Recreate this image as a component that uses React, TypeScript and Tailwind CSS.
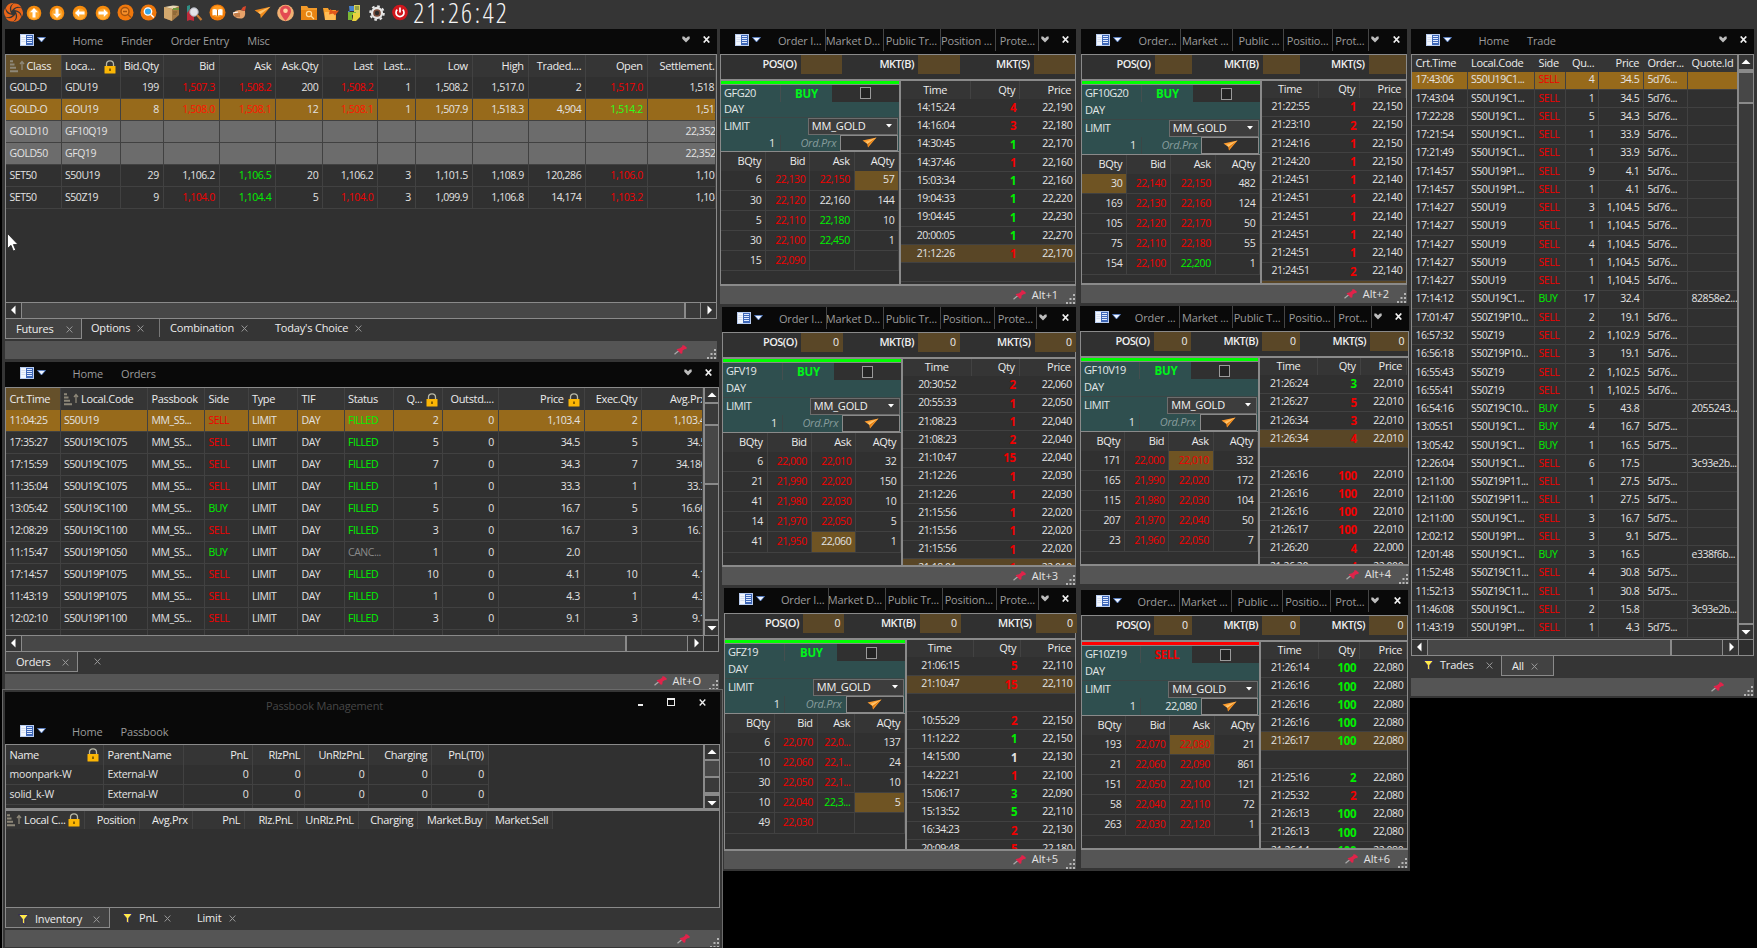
import React from "react";

type Cell = string | [string, string];

const R = "text-[#f00000]";
const G = "text-[#00f000]";

function cx(...c: (string | false | undefined)[]) {
  return c.filter(Boolean).join(" ");
}

/* ---------- small drawings ---------- */

function MenuIcon() {
  return (
    <svg width="26" height="12" viewBox="0 0 26 12" className="shrink-0">
      <rect x="0.5" y="0.5" width="13" height="11" fill="#f2f7ff" stroke="#b9cdf0" />
      <rect x="6" y="1" width="7" height="10" fill="#3f68b8" />
      <path d="M7 2.5h5M7 4.5h5M7 6.5h5M7 8.5h5" stroke="#dfeaff" strokeWidth="1" />
      <path d="M1.500 3.500h4M1.500 5.500h4M1.500 7.500h4" stroke="#c3cfe6" strokeWidth="0.600" />
      <path d="M17.500 3.500h8l-4 4.500z" fill="#eef4ff" stroke="#4f7fd6" strokeWidth="0.7" />
    </svg>
  );
}

function Chevron() {
  return (
    <svg width="8" height="7" viewBox="0 0 8 7" className="shrink-0">
      <path d="M0.300 0.600h1.800L4 2.200 5.900 0.600h1.800v2.200L4 6.600 0.300 2.800z" fill="#bdbdbd" />
    </svg>
  );
}

function CloseX({ c = "#f0f0f0", w = 1.7 }: { c?: string; w?: number }) {
  return (
    <svg width="7" height="7" viewBox="0 0 7 7" className="shrink-0">
      <path d="M0.700 0.500L6.300 6.500M6.300 0.500L0.700 6.500" stroke={c} strokeWidth={w} />
    </svg>
  );
}

function Pin() {
  return (
    <svg width="13" height="10" viewBox="0 0 13 10" className="shrink-0">
      <path d="M0.500 9.300L5 5.500" stroke="#a9a9a9" strokeWidth="1.200" />
      <path d="M2.500 4.200L6 3.300 8.300 1.600 8 0.400 10 0.200 12.800 2.600 12.300 4.200 11 4 8.600 5.500 8.300 8.400 6.800 8.800z" fill="#e0234a" />
    </svg>
  );
}

function Grip() {
  return (
    <svg width="10" height="10" viewBox="0 0 10 10" className="shrink-0">
      <path d="M7 0h2v2h-2zM7 4h2v2h-2zM7 8h2v2h-2zM3.500 4h2v2h-2zM3.500 8h2v2h-2zM0 8h2v2h-2z" fill="#b5b5b5" />
    </svg>
  );
}

function Lock() {
  return (
    <svg width="12" height="14" viewBox="0 0 12 14" className="shrink-0">
      <path d="M2.500 7V4a3.500 3.200 0 0 1 7 0v3" fill="none" stroke="#b9b9a8" strokeWidth="1.300" />
      <rect x="0.500" y="6" width="11" height="7.500" rx="0.500" fill="#fbb605" />
      <rect x="5.200" y="8.500" width="1.600" height="2.500" fill="#6d4c00" />
    </svg>
  );
}

function Funnel() {
  return (
    <svg width="11" height="11" viewBox="0 0 11 11" className="shrink-0">
      <path d="M0.500 0.500h10L6.800 5v5.300L4.300 9V5z" fill="#ffe94a" stroke="#29225c" strokeWidth="0.900" />
    </svg>
  );
}

function SortMark() {
  return (
    <svg width="15" height="13" viewBox="0 0 15 13" className="shrink-0">
      <path d="M0 1.200h3M0 4.500h4.500M0 7.800h6M0 11.200h8" stroke="#8d8778" strokeWidth="2" />
      <path d="M12 10V2M10 4l2-2.500L14 4" fill="none" stroke="#8d8778" strokeWidth="1.300" />
    </svg>
  );
}

function Plane() {
  return (
    <svg width="15" height="11" viewBox="0 0 15 11" className="shrink-0">
      <path d="M0.500 3.500L14.500 0.500 6 10.500 5.500 7z" fill="#ff9d2e" />
      <path d="M5.500 7L14.500 0.500 3.500 5z" fill="#ffc46b" />
      <path d="M5.500 7L14.500 0.500 7 7.500 6 10.500z" fill="#e07a10" />
    </svg>
  );
}

function Tri({ d }: { d: "l" | "r" | "u" | "d" }) {
  const path = { l: "M6.500 0.500v9L2 5z", r: "M3.500 0.500v9L8 5z", u: "M0.500 7h9L5 2.500z", d: "M0.500 3h9L5 7.500z" }[d];
  return (
    <svg width="10" height="10" viewBox="0 0 10 10" className="shrink-0">
      <path d={path} fill="#ffffff" />
    </svg>
  );
}

/* ---------- toolbar ---------- */

function Round({ children }: { children: React.ReactNode }) {
  return (
    <svg width="17" height="17" viewBox="0 0 17 17" className="shrink-0">
      <circle cx="8.500" cy="8.500" r="8" fill="#ef7a0a" />
      <circle cx="8.500" cy="7.500" r="6" fill="#ff9a1f" />
      {children}
    </svg>
  );
}

function ArrowIcon({ rot }: { rot: number }) {
  return (
    <svg width="16" height="16" viewBox="0 0 16 16" className="shrink-0">
      <circle cx="8" cy="8" r="7.300" fill="#f58a0c" />
      <circle cx="8" cy="9" r="5.500" fill="#ffa82e" />
      <path d="M8 3L12 7.200H9.500V12.500h-3V7.200H4z" fill="#fff" transform={`rotate(${rot} 8 8)`} />
    </svg>
  );
}

const toolIcons: React.ReactNode[] = [
  <ArrowIcon rot={0} />,
  <ArrowIcon rot={180} />,
  <ArrowIcon rot={270} />,
  <ArrowIcon rot={90} />,
  <svg width="17" height="17" viewBox="0 0 17 17">
    <circle cx="8.500" cy="8.500" r="8" fill="#f0780c" />
    <circle cx="8" cy="7.500" r="4" fill="#f7902b" stroke="#a3530f" strokeWidth="1.500" />
    <path d="M6 7.500h4M11 10.500l3 3" stroke="#a3530f" strokeWidth="1.500" />
  </svg>,
  <svg width="17" height="17" viewBox="0 0 17 17">
    <circle cx="8.500" cy="8.500" r="8" fill="#f0780c" />
    <circle cx="8" cy="7.500" r="3.700" fill="#39a7e8" stroke="#fff" strokeWidth="1.300" />
    <path d="M10.800 10.500l3 3" stroke="#fff" strokeWidth="1.600" />
  </svg>,
  <svg width="17" height="18" viewBox="0 0 17 18">
    <path d="M1 3l15-1v9l-7 6-8-3z" fill="#a57a45" />
    <path d="M1 3l8 2v12l-8-3z" fill="#d2a86e" />
    <path d="M2 3L10 1.500l6 0.500-6 3z" fill="#e9d8b5" />
    <path d="M10 4h6v2h-6z" fill="#6f963a" />
    <path d="M10 8h4M10 10h3" stroke="#7e5a2c" />
  </svg>,
  <svg width="18" height="18" viewBox="0 0 18 18">
    <path d="M2 2l3-1v13l-3-2z" fill="#2f8f86" />
    <path d="M5 5l4 2v10l-4-1-3 1V9z" fill="#c02a3a" />
    <circle cx="9" cy="8" r="4.200" fill="#e3e3ea" stroke="#aeb1bb" />
    <path d="M12 11l4.500 5" stroke="#c77a32" strokeWidth="2.200" />
  </svg>,
  <Round>
    <path d="M3.500 5.500Q6 4.500 8.500 6 11 4.500 13.500 5.500v6Q11 10.500 8.500 12 6 10.500 3.500 11.500z" fill="#fff" />
    <path d="M8.500 6v6" stroke="#c96d10" />
  </Round>,
  <svg width="16" height="17" viewBox="0 0 16 17">
    <path d="M1 9Q4 5.500 8 6l5 1q1 6-3 7.500-4 0.500-7-1.500l-2-2z" fill="#e7a26a" />
    <path d="M9 6l2-3 3-1-1 5z" fill="#d9472b" />
    <path d="M2 10h6M3 12h5" stroke="#9c5b2c" />
    <path d="M1 9l5-1" stroke="#fff" strokeWidth="1.200" />
  </svg>,
  <svg width="17" height="13" viewBox="0 0 15 11">
    <path d="M0.500 3.500L14.500 0.500 6 10.500 5.500 7z" fill="#f08b1c" />
    <path d="M5.500 7L14.500 0.500 3.500 5z" fill="#ffc46b" />
  </svg>,
  <svg width="17" height="18" viewBox="0 0 17 18">
    <circle cx="8.500" cy="9" r="8.300" fill="#f2b173" />
    <path d="M8.500 17Q3 10.500 3 7a5.500 5.500 0 0 1 11 0q0 3.500-5.500 10z" fill="#e34b52" />
    <circle cx="8.500" cy="6.800" r="2.300" fill="#ffd7a4" />
  </svg>,
  <svg width="18" height="16" viewBox="0 0 18 16">
    <path d="M1 1h6l1.500 2H17v12H1z" fill="#f49b2a" />
    <path d="M1 5h16v10H1z" fill="#e88412" />
    <circle cx="9" cy="9" r="2.600" fill="none" stroke="#ffdb9a" strokeWidth="1.200" />
    <path d="M11 11l3 3" stroke="#ffdb9a" strokeWidth="1.300" />
  </svg>,
  <svg width="18" height="16" viewBox="0 0 18 16">
    <path d="M1 3h5l1 2h7v10H3z" fill="#f7a02c" />
    <path d="M3 7h11l-1 8H3z" fill="#ffbd55" />
    <path d="M8 4l3 2 6-0.500-4 5-2-2-4 1z" fill="#e2571b" />
  </svg>,
  <svg width="16" height="18" viewBox="0 0 16 18">
    <path d="M3 2h6v5H2v5h2z" fill="#4682d0" />
    <rect x="8" y="1" width="6" height="8" fill="#d9d05a" />
    <path d="M9 3h4M9 5h4" stroke="#55712c" />
    <path d="M2 8h8v3H6v5H2z" fill="#7cb935" />
    <path d="M7 9h7v4l-4 4H6l1-4z" fill="#e9d33e" />
  </svg>,
  <svg width="16" height="16" viewBox="0 0 16 16">
    <circle cx="8" cy="8" r="5" fill="#7a4c3a" stroke="#e6e6e6" strokeWidth="2.300" />
    <circle cx="8" cy="8" r="6.800" fill="none" stroke="#e6e6e6" strokeWidth="2" strokeDasharray="2.600 2.740" />
    <circle cx="8" cy="8" r="2.200" fill="#2c2c2c" />
  </svg>,
  <svg width="16" height="17" viewBox="0 0 16 17">
    <circle cx="8" cy="8.500" r="7.800" fill="#d0161c" />
    <path d="M5.300 5.700a4 4 0 1 0 5.400 0" fill="none" stroke="#fff" strokeWidth="1.700" />
    <path d="M8 3.500v5" stroke="#fff" strokeWidth="1.700" />
  </svg>,
];

function Toolbar() {
  return (
    <div className="flex h-[25px] items-center pl-[4px]">
      <svg width="19" height="19" viewBox="0 0 20 20" className="shrink-0">
        {[0, 60, 120, 180, 240, 300].map((a) => (
          <path key={a} d="M10 0.600Q16 0 18.500 5Q14 2.500 10.500 5.500Q8.500 7 8 8.500Q6.500 4 10 0.600z" fill="#e8651a" transform={`rotate(${a} 10 10)`} />
        ))}
      </svg>
      <div className="flex items-center">
        {toolIcons.map((ic, i) => (
          <div key={i} className="flex w-[22.850px] items-center justify-center">
            {ic}
          </div>
        ))}
      </div>
      <div className="flex pl-[1px] text-[27px] leading-[25px] font-light text-[#f4f4f4] [font-stretch:75%]">
        {"21:26:42".split("").map((ch, i) => (
          <span key={i} className={cx("flex justify-center", ch === ":" ? "w-[9px]" : "w-[12.900px]")}>
            {ch}
          </span>
        ))}
      </div>
    </div>
  );
}

/* ---------- shared window parts ---------- */

function TitleBar({ items }: { items: string[] }) {
  return (
    <div className="flex h-[24.500px] shrink-0 items-center bg-[#090909] pr-[7px] pb-[2px] pl-[14.500px] text-[11px] tracking-[-0.150px] text-[#9b9b9b]">
      <MenuIcon />
      <div className="mt-[2px] ml-[27px] flex gap-[18px]">
        {items.map((t) => (
          <span key={t}>{t}</span>
        ))}
      </div>
      <div className="mb-[1px] ml-auto flex items-center gap-[13px]">
        <Chevron />
        <CloseX />
      </div>
    </div>
  );
}

interface Head {
  t: string;
  a?: "l" | "r" | "c";
  lock?: boolean;
  sort?: boolean;
  c?: string;
}

const alignOf = { l: "justify-start pl-[3.500px]", r: "justify-end pr-[3.800px]", c: "justify-center" };

function HeadRow({ cols, heads, h }: { cols: string; heads: Head[]; h: string }) {
  return (
    <div className={cx("grid shrink-0", cols)}>
      {heads.map((x, i) => (
        <div key={i} className={cx("flex items-center overflow-hidden border-r border-[#424242] bg-[#353535] text-[11px] tracking-[-0.350px] whitespace-nowrap text-[#ececec]", h, alignOf[x.a ?? "l"], x.c)}>
          {x.sort && (
            <span className="mr-[2px] flex">
              <SortMark />
            </span>
          )}
          <span>{x.t}</span>
          {x.lock && (
            <span className={cx("flex", x.a === "r" ? "ml-[4px]" : "mr-[4px] ml-auto")}>
              <Lock />
            </span>
          )}
        </div>
      ))}
    </div>
  );
}

function Row({ cols, cells, heads, h, bg }: { cols: string; cells: Cell[]; heads: Head[]; h: string; bg?: string }) {
  return (
    <div className={cx("grid shrink-0", cols, bg)}>
      {heads.map((hd, i) => {
        const cell = cells[i] ?? "";
        const t = typeof cell === "string" ? cell : cell[0];
        const c = typeof cell === "string" ? "" : cell[1];
        return (
          <div key={i} className={cx("flex items-center overflow-hidden border-r border-b border-[#414141] text-[10.500px] tracking-[-0.450px] whitespace-nowrap", h, alignOf[hd.a ?? "l"], c)}>
            {t}
          </div>
        );
      })}
    </div>
  );
}

function Btn({ d, c }: { d: "l" | "r" | "u" | "d"; c: string }) {
  return (
    <div className={cx("flex shrink-0 items-center justify-center border border-[#8a8a8a] bg-[#353535]", c)}>
      <Tri d={d} />
    </div>
  );
}

function HScroll({ thumb, corner }: { thumb: string; corner?: boolean }) {
  return (
    <div className="flex h-[16px] shrink-0 border-t border-[#8a8a8a]">
      <Btn d="l" c="w-[16px] border-y-0 border-l-0" />
      <div className={cx("border-r-2 border-[#8a8a8a] bg-[#474747]", thumb)} />
      <div className="flex-1 bg-[#3a3a3a]" />
      <Btn d="r" c="w-[16px] border-y-0 border-r-0" />
      {corner && <div className="w-[15px] border-l border-[#8a8a8a] bg-[#2e2e2e]" />}
    </div>
  );
}

function VScroll({ a, b }: { a: string; b: string }) {
  return (
    <div className="flex w-[16px] shrink-0 flex-col border-l-2 border-[#8a8a8a] bg-[#3a3a3a]">
      <Btn d="u" c="h-[16px] border-x-0 border-t-0 border-b-2" />
      <div className={cx("shrink-0 border-b-2 border-[#8a8a8a] bg-[#3a3a3a]", a)} />
      <div className={cx("shrink-0 border-b-2 border-[#8a8a8a] bg-[#474747]", b)} />
      <div className="flex-1" />
      <Btn d="d" c="h-[16px] border-x-0 border-b-0 border-t-2" />
    </div>
  );
}

function Status({ label, h = "h-[18px]" }: { label?: string; h?: string }) {
  return (
    <div className={cx("flex shrink-0 items-center justify-end overflow-hidden bg-[#555555] text-[11px] text-[#e4e4e4]", h)}>
      <Pin />
      {label ? <span className="ml-[6px]">{label}</span> : <span className="w-[12px]" />}
      <span className="mt-[8px] ml-[8px] flex">
        <Grip />
      </span>
    </div>
  );
}

function Tab({ t, c, active, funnel }: { t: string; c: string; active?: boolean; funnel?: boolean }) {
  return (
    <div className={cx("flex items-center text-[11px] tracking-[-0.200px] whitespace-nowrap text-[#ededed]", active ? "h-[20px] border border-t-0 border-[#8a8a8a] bg-[#424242] pt-[3px]" : "h-[20px]", c)}>
      {funnel && (
        <span className="mr-[6px] flex">
          <Funnel />
        </span>
      )}
      <span>{t}</span>
      <span className="ml-auto flex">
        <CloseX c="#9a9a9a" w={1} />
      </span>
    </div>
  );
}

/* ---------- futures ---------- */

const futCols = "grid-cols-[55.500px_59px_43px_56px_56.500px_47px_55px_37.500px_57px_56px_57.500px_61.500px_68px]";
const futHeads: Head[] = [
  { t: "Class", sort: true, c: "!bg-[#65502a]" },
  { t: "Loca...", lock: true },
  { t: "Bid.Qty", a: "r" },
  { t: "Bid", a: "r" },
  { t: "Ask", a: "r" },
  { t: "Ask.Qty", a: "r" },
  { t: "Last", a: "r" },
  { t: "Last...", a: "r" },
  { t: "Low", a: "r" },
  { t: "High", a: "r" },
  { t: "Traded....", a: "r" },
  { t: "Open", a: "r" },
  { t: "Settlement.", c: "pl-[12px]" },
];
const S1 = "pl-[42px]";
const S2 = "pl-[48px]";
const S3 = "pl-[38px]";
const futRows: { cells: Cell[]; bg?: string }[] = [
  { cells: ["GOLD-D", "GDU19", "199", ["1,507.3", R], ["1,508.2", R], "200", ["1,508.2", R], "1", "1,508.2", "1,517.0", "2", ["1,517.0", R], ["1,518", S1]] },
  { bg: "bg-[#976a1b]", cells: ["GOLD-O", "GOU19", "8", ["1,508.0", "text-[#ff1500]"], ["1,508.1", "text-[#ff1500]"], "12", ["1,508.1", "text-[#ff1500]"], "1", "1,507.9", "1,518.3", "4,904", ["1,514.2", "text-[#2cff1a]"], ["1,512", S2]] },
  { bg: "bg-[#6c6c6c]", cells: ["GOLD10", "GF10Q19", "", "", "", "", "", "", "", "", "", "", ["22,352", S3]] },
  { bg: "bg-[#6c6c6c]", cells: ["GOLD50", "GFQ19", "", "", "", "", "", "", "", "", "", "", ["22,352", S3]] },
  { cells: ["SET50", "S50U19", "29", "1,106.2", ["1,106.5", G], "20", "1,106.2", "3", "1,101.5", "1,108.9", "120,286", ["1,106.0", R], ["1,106", S2]] },
  { cells: ["SET50", "S50Z19", "9", ["1,104.0", R], ["1,104.4", G], "5", ["1,104.0", R], "3", "1,099.9", "1,106.8", "14,174", ["1,103.2", R], ["1,104", S2]] },
];

function Futures() {
  return (
    <div className="absolute top-[29px] left-[5px] flex h-[330px] w-[712px] flex-col">
      <TitleBar items={["Home", "Finder", "Order Entry", "Misc"]} />
      <div className="flex h-[265px] shrink-0 flex-col overflow-hidden border border-[#8a8a8a] bg-[#303030]">
        <HeadRow cols={futCols} heads={futHeads} h="h-[22px] pt-[2px]" />
        {futRows.map((r, i) => (
          <Row key={i} cols={futCols} heads={futHeads} cells={r.cells} bg={r.bg} h="h-[22px] pt-[2px]" />
        ))}
        <div className="flex-1" />
        <HScroll thumb="w-[664px]" />
      </div>
      <div className="flex h-[22px] shrink-0">
        <Tab t="Futures" active c="w-[77px] pr-[8px] pl-[10px]" />
        <Tab t="Options" c="ml-[9px] w-[53px]" />
        <div className="ml-[15px] h-[18px] border-l border-[#777]" />
        <Tab t="Combination" c="ml-[10px] w-[78px]" />
        <Tab t="Today's Choice" c="ml-[27px] w-[87px]" />
      </div>
      <Status />
    </div>
  );
}

/* ---------- orders ---------- */

const ordCols = "grid-cols-[54.500px_87.500px_57px_43.500px_49.500px_46.500px_49.500px_49px_55.500px_86px_57.500px_61px]";
const ordHeads: Head[] = [
  { t: "Crt.Time", c: "!bg-[#65502a]" },
  { t: "Local.Code", sort: true },
  { t: "Passbook" },
  { t: "Side" },
  { t: "Type" },
  { t: "TIF" },
  { t: "Status" },
  { t: "Q...", a: "r", lock: true },
  { t: "Outstd....", a: "r" },
  { t: "Price", a: "r", lock: true },
  { t: "Exec.Qty", a: "r" },
  { t: "Avg.Prx", c: "pl-[28px]" },
];
const orders: [string, string, string, string, string, string, string, string, string][] = [
  ["11:04:25", "S50U19", "SELL", "FILLED", "2", "1,103.4", "2", "1,103.4", "pl-[31px]"],
  ["17:35:27", "S50U19C1075", "SELL", "FILLED", "5", "34.5", "5", "34.5", "pl-[45px]"],
  ["17:15:59", "S50U19C1075", "SELL", "FILLED", "7", "34.3", "7", "34.186", "pl-[34px]"],
  ["11:35:04", "S50U19C1075", "SELL", "FILLED", "1", "33.3", "1", "33.3", "pl-[45px]"],
  ["13:05:42", "S50U19C1100", "BUY", "FILLED", "5", "16.7", "5", "16.66", "pl-[39px]"],
  ["12:08:29", "S50U19C1100", "SELL", "FILLED", "3", "16.7", "3", "16.7", "pl-[45px]"],
  ["11:15:47", "S50U19P1050", "BUY", "CANC...", "1", "2.0", "", "", ""],
  ["17:14:57", "S50U19P1075", "SELL", "FILLED", "10", "4.1", "10", "4.1", "pl-[50px]"],
  ["11:43:19", "S50U19P1075", "SELL", "FILLED", "1", "4.3", "1", "4.3", "pl-[50px]"],
  ["12:02:10", "S50U19P1100", "SELL", "FILLED", "3", "9.1", "3", "9.1", "pl-[50px]"],
];

function Orders() {
  return (
    <div className="absolute top-[362px] left-[5px] flex h-[327px] w-[714px] flex-col">
      <TitleBar items={["Home", "Orders"]} />
      <div className="flex h-[265px] shrink-0 flex-col overflow-hidden border border-[#8a8a8a] bg-[#303030]">
        <div className="flex min-h-0 flex-1">
          <div className="w-[697px] shrink-0 overflow-hidden">
            <HeadRow cols={ordCols} heads={ordHeads} h="h-[22px] pt-[2px]" />
            {orders.map((o, i) => (
              <Row
                key={i}
                cols={ordCols}
                heads={ordHeads}
                bg={i === 0 ? "bg-[#976a1b]" : undefined}
                h="h-[22px] pt-[2px]"
                cells={[o[0], o[1], "MM_S5...", [o[2], o[2] === "BUY" ? G : R], "LIMIT", "DAY", [o[3], o[3] === "FILLED" ? G : "text-[#8a8a8a]"], o[4], "0", o[5], o[6], [o[7], o[8]]]}
              />
            ))}
            <Row cols={ordCols} heads={ordHeads} cells={[]} h="h-[22px]" />
          </div>
          <VScroll a="h-[22px]" b="h-[59px]" />
        </div>
        <HScroll thumb="w-[605px]" corner />
      </div>
      <div className="flex h-[22px] shrink-0">
        <Tab t="Orders" active c="w-[73px] pr-[8px] pl-[10px]" />
        <Tab t="" c="ml-[16px] w-[7px]" />
      </div>
      <Status label="Alt+O" h="h-[15px]" />
    </div>
  );
}

/* ---------- passbook ---------- */

const pbCols = "grid-cols-[98px_80px_69px_52px_64px_63px_56.500px]";
const pbHeads: Head[] = [
  { t: "Name", lock: true },
  { t: "Parent.Name" },
  { t: "PnL", a: "r" },
  { t: "RlzPnL", a: "r" },
  { t: "UnRlzPnL", a: "r" },
  { t: "Charging", a: "r" },
  { t: "PnL(T0)", a: "r" },
];
const pcCols = "grid-cols-[79px_55px_52.500px_52.500px_52.500px_61px_59.500px_69px_66px]";
const pcHeads: Head[] = [
  { t: "Local C...", sort: true, lock: true, c: "!pl-[1px]" },
  { t: "Position", a: "r" },
  { t: "Avg.Prx", a: "r" },
  { t: "PnL", a: "r" },
  { t: "Rlz.PnL", a: "r" },
  { t: "UnRlz.PnL", a: "r" },
  { t: "Charging", a: "r" },
  { t: "Market.Buy", a: "r" },
  { t: "Market.Sell", a: "r" },
];

function Passbook() {
  return (
    <div className="absolute top-[689px] left-[2px] flex h-[259px] w-[721px] flex-col border-x border-t border-[#6b6b6b] bg-[#353535] px-[2px] pt-[2px]">
      <div className="flex h-[52px] shrink-0 flex-col bg-[#090909]">
        <div className="relative flex h-[29px] items-center justify-end pr-[14px]">
          <span className="absolute left-[261px] text-[11px] tracking-[-0.150px] text-[#474747]">Passbook Management</span>
          <div className="flex items-center gap-[24px] pb-[9px]">
            <div className="mt-[6px] h-[2px] w-[5px] bg-[#eee]" />
            <div className="h-[8px] w-[8px] border border-t-2 border-[#eee]" />
            <CloseX w={1.3} />
          </div>
        </div>
        <div className="flex h-[20px] items-center pl-[15px] text-[11px] tracking-[-0.150px] text-[#9b9b9b]">
          <MenuIcon />
          <span className="mt-[2px] ml-[26px]">Home</span>
          <span className="mt-[2px] ml-[18px]">Passbook</span>
        </div>
      </div>
      <div className="flex h-[65px] shrink-0 overflow-hidden border border-[#8a8a8a] bg-[#303030]">
        <div className="min-w-0 flex-1 overflow-hidden">
          <HeadRow cols={pbCols} heads={pbHeads} h="h-[20px]" />
          {["moonpark-W", "solid_k-W", ""].map((n) => (
            <Row key={n} cols={pbCols} heads={pbHeads} h="h-[20px] pt-[1px]" cells={n ? [[n, "!tracking-[-0.200px]"], ["External-W", "!tracking-[-0.300px]"], "0", "0", "0", "0", "0"] : []} />
          ))}
        </div>
        <VScroll a="h-[17px] !bg-[#474747]" b="h-[16px] !bg-[#3a3a3a]" />
      </div>
      <div className="flex h-[99px] shrink-0 flex-col border border-t-2 border-[#8a8a8a] bg-[#303030]">
        <HeadRow cols={pcCols} heads={pcHeads} h="h-[18px]" />
      </div>
      <div className="flex h-[22px] shrink-0">
        <Tab t="Inventory" funnel active c="w-[105px] pr-[9px] pl-[12px]" />
        <Tab t="PnL" funnel c="ml-[12px] w-[49px]" />
        <Tab t="Limit" c="ml-[26px] w-[39px]" />
      </div>
      <Status h="h-[17px]" />
    </div>
  );
}

/* ---------- order ticket windows ---------- */

interface Ticket {
  pos: string;
  tabs: string[];
  tabCols: string;
  posVal: string;
  posCols: string;
  symbol: string;
  sell?: boolean;
  price?: string;
  split: string;
  formRow: string;
  bookCols: string;
  book: Cell[][];
  tapeCols: string;
  tape: string[];
  tapeHead?: string;
  paneH: string;
  alt: string;
}

const bookHeads: Head[] = [
  { t: "BQty", a: "r" },
  { t: "Bid", a: "r" },
  { t: "Ask", a: "r" },
  { t: "AQty", a: "r" },
];
const tapeHeads: Head[] = [
  { t: "Time", a: "c" },
  { t: "Qty", a: "r" },
  { t: "Price", a: "r" },
];
const HL = "bg-[#6f5423]";

function TicketWindow({ w }: { w: Ticket }) {
  return (
    <div className={cx("absolute flex flex-col", w.pos)}>
      <div className="flex h-[24.500px] shrink-0 items-center bg-[#090909] pr-[7px] pb-[2px] text-[11px] tracking-[-0.150px] text-[#9b9b9b]">
        <div className={cx("grid h-[22px]", w.tabCols)}>
          {w.tabs.map((t, i) => (
            <div key={i} className="flex items-center justify-end overflow-hidden border-r border-[#454545] pr-[3px] whitespace-nowrap">
              {i === 0 && (
                <span className="mr-auto flex pl-[14.500px]">
                  <MenuIcon />
                </span>
              )}
              <span className="mt-[2px]">{t}</span>
            </div>
          ))}
        </div>
        <span className="mb-[1px] ml-[2px] flex">
          <Chevron />
        </span>
        <span className="mb-[1px] ml-auto flex">
          <CloseX />
        </span>
      </div>
      <div className={cx("grid h-[25.500px] shrink-0 border border-b-0 border-[#8a8a8a] bg-[#303030] text-[11px] font-semibold tracking-[-0.500px] text-[#efefef]", w.posCols)}>
        {["POS(O)", "MKT(B)", "MKT(S)"].map((l) => (
          <React.Fragment key={l}>
            <div className="flex h-[19px] items-center justify-end pt-[1px] pr-[4px]">{l}</div>
            <div className="flex h-[19px] items-center justify-end bg-[#5a4727] pt-[1px] pr-[4px] text-[10.500px] font-normal">{w.posVal}</div>
          </React.Fragment>
        ))}
      </div>
      <div className={cx("flex shrink-0 border-x border-y-2 border-[#8a8a8a]", w.paneH)}>
        <div className={cx("flex shrink-0 flex-col overflow-hidden border-r-2 border-[#8a8a8a] bg-[#303030]", w.split)}>
          <div className={cx("h-[3px] shrink-0", w.sell ? "bg-[#ff0000]" : "bg-[#00ff00]")} />
          <div className="shrink-0 border-t border-[#8a8a8a]" />
          <div className="shrink-0 bg-[#2f4f4f] text-[11px] tracking-[-0.500px] text-[#e2e8e8]">
            <div className={cx("flex", w.formRow)}>
              <div className="flex w-[33.600%] items-center border-r border-[#444f4f] pl-[3px]">{w.symbol}</div>
              <div className={cx("flex w-[28.800%] items-center justify-center text-[11.500px] font-bold tracking-[-0.300px]", w.sell ? "text-[#f00000]" : "text-[#00f51a]")}>{w.sell ? "SELL" : "BUY"}</div>
              <div className="flex flex-1 items-center justify-center bg-[#303030]">
                <div className="h-[12px] w-[11px] border border-[#9a9a9a] bg-[#232323]" />
              </div>
            </div>
            <div className={cx("flex items-center border-b border-[#3b4646] pl-[3px]", w.formRow)}>DAY</div>
            <div className={cx("flex", w.formRow)}>
              <div className="flex w-[48.700%] items-center pl-[3px]">LIMIT</div>
              <div className="mr-px flex flex-1 items-center border border-[#6d6d6d] bg-[#3d3d3d] pr-[5px] pl-[3px] tracking-[-0.150px] text-[#f2f2f2]">
                MM_GOLD
                <svg width="6" height="4" viewBox="0 0 6 4" className="ml-auto">
                  <path d="M0 0h6L3 3.500z" fill="#fff" />
                </svg>
              </div>
            </div>
            <div className={cx("flex", w.formRow)}>
              <div className="flex w-[33.600%] items-center justify-end border-r border-[#3b4646] pr-[5px]">1</div>
              <div className={cx("flex w-[33.400%] items-center justify-end pr-[4px]", !w.price && "tracking-[-0.200px] text-[#889c9c] italic")}>{w.price ?? "Ord.Prx"}</div>
              <div className="mr-px flex flex-1 items-center justify-center border border-[#8a8a8a] bg-[#303030]">
                <Plane />
              </div>
            </div>
          </div>
          <div className="shrink-0 border-t border-[#8a8a8a]" />
          <HeadRow cols={w.bookCols} heads={bookHeads} h="h-[18.700px]" />
          {w.book.map((b, i) => (
            <Row key={i} cols={w.bookCols} heads={bookHeads} cells={b} h="h-[20.130px]" />
          ))}
        </div>
        <div className="min-w-0 flex-1 overflow-hidden bg-[#303030]">
          <HeadRow cols={w.tapeCols} heads={tapeHeads} h={w.tapeHead ?? "h-[17.300px]"} />
          {w.tape.map((line, i) => {
            const [t = "", q = "", p = "", hl] = line.split(" ");
            const color = q.startsWith("+") ? G : q.startsWith("=") ? "" : R;
            return (
              <Row
                key={i}
                cols={w.tapeCols}
                heads={tapeHeads}
                h="h-[18.270px] border-r-0"
                bg={hl ? "bg-[#594626]" : undefined}
                cells={[t, [q.replace(/[+=-]/, ""), cx("font-bold !text-[11.500px] !tracking-[-0.300px]", color)], p]}
              />
            );
          })}
        </div>
      </div>
      <Status label={w.alt} />
    </div>
  );
}

function book(rows: string[], hl: [number, number]): Cell[][] {
  return rows.map((r, i) =>
    r.split(" ").map((v, j) => {
      const color = v.startsWith("-") ? R : v.startsWith("+") ? G : "";
      const bg = hl[0] === i && hl[1] === j ? HL : "";
      return [v.replace(/^[+-]/, ""), cx(color, bg)] as Cell;
    })
  );
}

const tickets: Ticket[] = [
  {
    pos: "top-[29px] left-[720px] w-[356px]",
    tabs: ["Order I...", "Market D...", "Public Tr...", "Position ...", "Prote..."],
    tabCols: "grid-cols-[105.500px_58.500px_57px_55px_43px]",
    posVal: "",
    posCols: "grid-cols-[79.500px_41.500px_76px_41.500px_74px_41.500px]",
    symbol: "GFG20",
    split: "w-[180px]",
    formRow: "h-[16.500px]",
    bookCols: "grid-cols-[45px_44px_44.500px_44.500px]",
    book: book(["6 -22,130 -22,150 57", "30 -22,120 22,160 144", "5 -22,110 +22,180 10", "30 -22,100 +22,450 1", "15 -22,090"], [0, 3]),
    tapeCols: "grid-cols-[69.500px_49.500px_56px]",
    tape: ["14:15:24 -4 22,190", "14:16:04 -3 22,180", "14:30:45 +1 22,170", "14:37:46 -1 22,160", "15:03:34 +1 22,160", "19:04:33 +1 22,220", "19:04:45 +1 22,230", "20:00:05 +1 22,270", "21:12:26 -1 22,170 h", ""],
    tapeHead: "h-[18px]",
    paneH: "h-[207px]",
    alt: "Alt+1",
  },
  {
    pos: "top-[29px] left-[1081px] w-[326px]",
    tabs: ["Order...", "Market ...", "Public ...", "Positio...", "Prot..."],
    tabCols: "grid-cols-[99.500px_52px_51px_49px_36px]",
    posVal: "",
    posCols: "grid-cols-[72.500px_37.500px_70.500px_37.500px_68.500px_37.500px]",
    symbol: "GF10G20",
    split: "w-[180px]",
    formRow: "h-[17.300px]",
    bookCols: "grid-cols-[45px_43.500px_45px_44.500px]",
    book: book(["30 -22,140 -22,150 482", "169 -22,130 -22,160 124", "105 -22,120 -22,170 50", "75 -22,110 -22,180 55", "154 -22,100 +22,200 1"], [0, 0]),
    tapeCols: "grid-cols-[57px_41px_46px]",
    tape: ["21:22:55 -1 22,150", "21:23:10 -2 22,150", "21:24:16 -1 22,150", "21:24:20 -1 22,150", "21:24:51 -1 22,140", "21:24:51 -1 22,140", "21:24:51 -1 22,140", "21:24:51 -1 22,140", "21:24:51 -1 22,140", "21:24:51 -2 22,140", "   h"],
    paneH: "h-[206px]",
    alt: "Alt+2",
  },
  {
    pos: "top-[307px] left-[722px] w-[354px]",
    tabs: ["Order I...", "Market D...", "Public Tr...", "Position...", "Prote..."],
    tabCols: "grid-cols-[104.500px_57.500px_57px_54px_42px]",
    posVal: "0",
    posCols: "grid-cols-[78px_41.500px_75.500px_41.500px_75px_41px]",
    symbol: "GFV19",
    split: "w-[180px]",
    formRow: "h-[17.300px]",
    bookCols: "grid-cols-[44.500px_44px_44.500px_45px]",
    book: book(["6 -22,000 -22,010 32", "21 -21,990 -22,020 150", "41 -21,980 -22,030 10", "14 -21,970 -22,050 5", "41 -21,950 22,060 1"], [4, 2]),
    tapeCols: "grid-cols-[68.500px_48px_56px]",
    tape: ["20:30:52 -2 22,060", "20:55:33 -1 22,050", "21:08:23 -1 22,040", "21:08:23 -2 22,040", "21:10:47 -15 22,040", "21:12:26 -1 22,030", "21:12:26 -1 22,030", "21:15:56 -1 22,020", "21:15:56 -1 22,020", "21:15:56 -1 22,020", "21:18:01 -1 22,010 h"],
    paneH: "h-[210px]",
    alt: "Alt+3",
  },
  {
    pos: "top-[306px] left-[1080px] w-[329px]",
    tabs: ["Order ...", "Market ...", "Public T...", "Positio...", "Prot..."],
    tabCols: "grid-cols-[99.500px_53px_52px_50px_37px]",
    posVal: "0",
    posCols: "grid-cols-[72.500px_37.500px_71px_37.500px_70.500px_38px]",
    symbol: "GF10V19",
    split: "w-[179px]",
    formRow: "h-[17.300px]",
    bookCols: "grid-cols-[44px_44px_44.500px_44.500px]",
    book: book(["171 -22,000 -22,010 332", "165 -21,990 -22,020 172", "115 -21,980 -22,030 104", "207 -21,970 -22,040 50", "23 -21,960 -22,050 7"], [0, 2]),
    tapeCols: "grid-cols-[58px_42.500px_46.500px]",
    tape: ["21:26:24 +3 22,010", "21:26:27 -5 22,010", "21:26:34 -3 22,010", "21:26:34 -4 22,010 h", "", "21:26:16 -100 22,010", "21:26:16 -100 22,010", "21:26:16 -100 22,010", "21:26:17 -100 22,010", "21:26:20 -4 22,000", "21:26:20 -4 22,000"],
    paneH: "h-[209.500px]",
    alt: "Alt+4",
  },
  {
    pos: "top-[588px] left-[724px] w-[352px]",
    tabs: ["Order I...", "Market D...", "Public Tr...", "Position...", "Prote..."],
    tabCols: "grid-cols-[104.500px_57.500px_57px_54px_42px]",
    posVal: "0",
    posCols: "grid-cols-[78px_41px_75.500px_41px_75px_41px]",
    symbol: "GFZ19",
    split: "w-[182px]",
    formRow: "h-[17.300px]",
    bookCols: "grid-cols-[49.500px_43px_37.500px_50px]",
    book: book(["6 -22,070 -22,0... 137", "10 -22,060 -22,1... 24", "30 -22,050 -22,1... 10", "10 -22,040 +22,3... 5", "49 -22,030"], [3, 3]),
    tapeCols: "grid-cols-[66.500px_47.500px_55px]",
    tape: ["21:06:15 -5 22,110", "21:10:47 -15 22,110 h", "", "10:55:29 -2 22,150", "11:12:22 +1 22,150", "14:15:00 =1 22,130", "14:22:21 -1 22,100", "15:06:17 +3 22,090", "15:13:52 +5 22,110", "16:34:23 -2 22,130", "20:09:48 -5 22,180"],
    paneH: "h-[212.500px]",
    alt: "Alt+5",
  },
  {
    pos: "top-[590px] left-[1081px] w-[327px]",
    tabs: ["Order...", "Market ...", "Public ...", "Positio...", "Prot..."],
    tabCols: "grid-cols-[98.500px_52px_51px_48.500px_37.500px]",
    posVal: "0",
    posCols: "grid-cols-[72px_37.500px_70.500px_37.500px_69.500px_38px]",
    symbol: "GF10Z19",
    sell: true,
    price: "22,080",
    split: "w-[179px]",
    formRow: "h-[17.300px]",
    bookCols: "grid-cols-[44px_44px_44.500px_44.500px]",
    book: book(["193 -22,070 -22,080 21", "21 -22,060 -22,090 861", "151 -22,050 -22,100 121", "58 -22,040 -22,110 72", "263 -22,030 -22,120 1"], [0, 2]),
    tapeCols: "grid-cols-[58px_41px_47px]",
    tape: ["21:26:14 +100 22,080", "21:26:16 +100 22,080", "21:26:16 +100 22,080", "21:26:16 +100 22,080", "21:26:17 +100 22,080 h", "", "21:25:16 +2 22,080", "21:25:32 -2 22,080", "21:26:13 +100 22,080", "21:26:13 +100 22,080", "21:26:14 +100 22,080"],
    paneH: "h-[210px]",
    alt: "Alt+6",
  },
];

/* ---------- trades ---------- */

const trCols = "grid-cols-[55.500px_67.500px_31px_33px_45px_44px_51px]";
const trHeads: Head[] = [
  { t: "Crt.Time", c: "!border-[#353535]" },
  { t: "Local.Code", c: "!border-[#353535]" },
  { t: "Side", c: "!border-[#353535]" },
  { t: "Qu...", a: "r", c: "!border-[#353535]" },
  { t: "Price", a: "r", c: "!border-[#353535]" },
  { t: "Order...", c: "!border-[#353535]" },
  { t: "Quote.Id", c: "!border-[#353535]" },
];
const trades = [
  "17:43:06 S50U19C1... SELL 4 34.5 5d76...",
  "17:43:04 S50U19C1... SELL 1 34.5 5d76...",
  "17:22:28 S50U19C1... SELL 5 34.3 5d76...",
  "17:21:54 S50U19C1... SELL 1 33.9 5d76...",
  "17:21:49 S50U19C1... SELL 1 33.9 5d76...",
  "17:14:57 S50U19P1... SELL 9 4.1 5d76...",
  "17:14:57 S50U19P1... SELL 1 4.1 5d76...",
  "17:14:27 S50U19 SELL 3 1,104.5 5d76...",
  "17:14:27 S50U19 SELL 1 1,104.5 5d76...",
  "17:14:27 S50U19 SELL 4 1,104.5 5d76...",
  "17:14:27 S50U19 SELL 1 1,104.5 5d76...",
  "17:14:27 S50U19 SELL 1 1,104.5 5d76...",
  "17:14:12 S50U19C1... BUY 17 32.4  82858e2...",
  "17:01:47 S50Z19P10... SELL 2 19.1 5d76...",
  "16:57:32 S50Z19 SELL 2 1,102.9 5d76...",
  "16:56:18 S50Z19P10... SELL 3 19.1 5d76...",
  "16:55:43 S50Z19 SELL 2 1,102.5 5d76...",
  "16:55:41 S50Z19 SELL 1 1,102.5 5d76...",
  "16:54:16 S50Z19C10... BUY 5 43.8  2055243...",
  "13:05:51 S50U19C1... BUY 4 16.7 5d75...",
  "13:05:42 S50U19C1... BUY 1 16.5 5d75...",
  "12:26:04 S50U19C1... SELL 6 17.5  3c93e2b...",
  "12:11:00 S50Z19P11... SELL 1 27.5 5d75...",
  "12:11:00 S50Z19P11... SELL 1 27.5 5d75...",
  "12:11:00 S50U19C1... SELL 3 16.7 5d75...",
  "12:02:12 S50U19P1... SELL 3 9.1 5d75...",
  "12:01:48 S50U19C1... BUY 3 16.5  e338f6b...",
  "11:52:48 S50Z19C11... SELL 4 30.8 5d75...",
  "11:52:13 S50Z19C11... SELL 1 30.8 5d75...",
  "11:46:08 S50U19C1... SELL 2 15.8  3c93e2b...",
  "11:43:19 S50U19P1... SELL 1 4.3 5d75...",
];

function Trades() {
  return (
    <div className="absolute top-[29px] left-[1411px] flex w-[343px] flex-col">
      <TitleBar items={["Home", "Trade"]} />
      <div className="flex h-[602px] shrink-0 flex-col overflow-hidden border border-[#8a8a8a] bg-[#303030]">
        <div className="flex min-h-0 flex-1">
          <div className="min-w-0 flex-1 overflow-hidden">
            <HeadRow cols={trCols} heads={trHeads} h="h-[17px]" />
            {trades.map((l, i) => {
              const c = l.split(" ");
              return (
                <Row
                  key={i}
                  cols={trCols}
                  heads={trHeads}
                  bg={i === 0 ? "bg-[#976a1b]" : undefined}
                  h="h-[18.270px]"
                  cells={[c[0], c[1], [c[2], c[2] === "BUY" ? G : R], c[3], c[4], c[5] ?? "", c[6] ?? ""]}
                />
              );
            })}
          </div>
          <VScroll a="h-[0px] border-b-0" b="h-[31px]" />
        </div>
        <HScroll thumb="w-[244px]" corner />
      </div>
      <div className="flex h-[22px] shrink-0">
        <Tab t="Trades" funnel c="ml-[12px] w-[70px]" />
        <Tab t="All" active c="ml-[8px] w-[53px] pr-[15px] pl-[10px]" />
      </div>
      <Status />
    </div>
  );
}

export default function App() {
  return (
    <div className="relative h-[948px] w-[1757px] overflow-hidden bg-black font-['Open_Sans','Noto_Sans',sans-serif] text-[#e3e3e3]">
      <div className="absolute top-0 left-[2px] h-[871px] w-[1755px] bg-[#353535]" />
      <div className="absolute top-[698px] left-[1410px] h-[250px] w-[347px] bg-black" />
      <div className="relative h-[25px]">
        <Toolbar />
      </div>
      <Futures />
      <Orders />
      <Passbook />
      {tickets.map((w) => (
        <TicketWindow key={w.alt} w={w} />
      ))}
      <Trades />
      <svg width="12" height="19" viewBox="0 0 12 19" className="absolute top-[233px] left-[7px]">
        <path d="M0.500 0.500V15.500L4 12.300 6.300 18 8.700 17 6.400 11.500H11z" fill="#fff" stroke="#222" strokeWidth="0.800" />
      </svg>
    </div>
  );
}
